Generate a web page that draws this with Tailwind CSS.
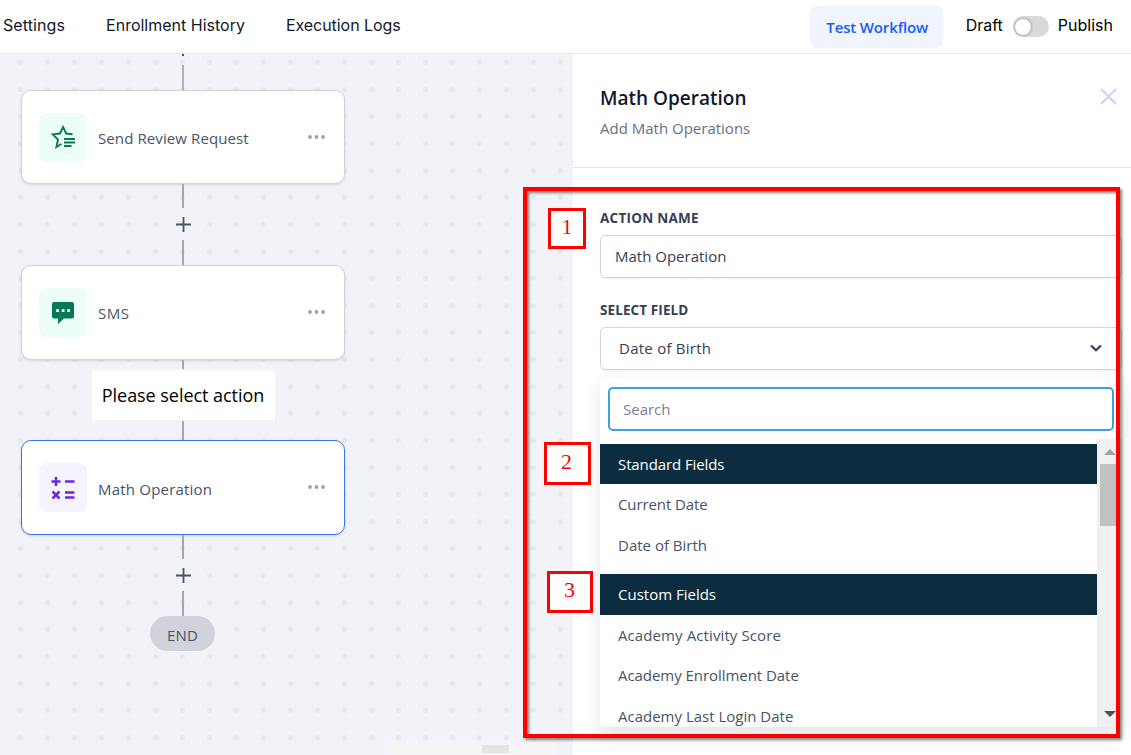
<!DOCTYPE html>
<html lang="en">

<head>
  <meta charset="UTF-8">
  <meta name="viewport" content="width=device-width, initial-scale=1.0">
  <title>Workflow - Math Operation</title>
  <script src="https://cdn.jsdelivr.net/npm/@tailwindcss/browser@4"></script>
</head>

<body class="relative flex h-[755px] w-[1131px] flex-col overflow-hidden bg-white font-['Open_Sans','Noto_Sans',sans-serif] text-[15px] text-[#475467]">
  <!-- Top bar -->
  <header class="flex h-[54px] shrink-0 items-start border-b border-[#e9eaee] bg-white font-['Inter',sans-serif] text-base text-[#101828]">
    <nav class="flex gap-[41px] pt-[13px] pl-[3px] whitespace-nowrap">
      <a class="tracking-[0.1px]">Settings</a>
      <a>Enrollment History</a>
      <a class="tracking-[-0.05px]">Execution Logs</a>
    </nav>
    <div class="mr-[18px] ml-auto flex items-start whitespace-nowrap text-black">
      <button class="mt-[6px] mr-[23px] h-[41px] w-[133px] rounded-lg bg-[#eff4ff] pt-[2px] pl-[2px] font-['Open_Sans',sans-serif] text-[15px] font-semibold tracking-[-0.15px] text-[#155eef] shadow-xs">Test Workflow</button>
      <span class="pt-[13px]">Draft</span>
      <span class="mt-4 mr-[9px] ml-[10px] flex h-[21px] w-9 items-center rounded-full bg-[#d9d9d9] px-[2px]">
        <span class="size-4 rounded-full bg-white shadow-[0_0_3px_rgba(0,0,0,0.45)]"></span>
      </span>
      <span class="pt-[13px]">Publish</span>
    </div>
  </header>

  <div class="flex min-h-0 flex-1">
    <!-- Workflow canvas -->
    <main class="relative w-[573px] shrink-0 overflow-hidden bg-[#f2f3f8] bg-[radial-gradient(circle,#e8e8e8_2.3px,transparent_3px)] bg-[length:27px_27px] bg-[position:7px_-5px]">
      <div class="ml-[21px] flex w-[324px] flex-col items-center">
        <div class="h-[2px] w-[2px] bg-[#475467]"></div>
        <div class="mt-[9px] h-[25px] w-[1.5px] bg-[#b0b2b8]"></div>

        <div class="flex h-[94px] w-full items-center rounded-[10px] border border-[#d0d5dd] bg-white pr-[18px] pl-[17px] shadow-sm">
          <div class="flex h-[49px] w-12 items-center justify-center rounded-lg bg-[#ecfdf5]">
            <svg class="size-6" viewBox="0 0 24 24" fill="none" stroke="#047857" stroke-width="1.9">
              <path d="M21.500 9.200L15.200 8.500L12 2L9 8.500L1.700 9.400L7 14.500L5.400 22L10.400 19" />
              <path d="M13 14H24M13 17.500H24M13 21H20.500" />
            </svg>
          </div>
          <span class="mt-[3px] ml-[11px] tracking-[0.1px]">Send Review Request</span>
          <svg class="mr-px mb-px ml-auto h-[4px] w-[17px]" viewBox="0 0 17 4" fill="#98a2b3"><circle cx="2" cy="2" r="1.9" /><circle cx="8.5" cy="2" r="1.9" /><circle cx="15" cy="2" r="1.9" /></svg>
        </div>

        <div class="h-6 w-[1.5px] bg-[#a4a7ae]"></div>
        <div class="flex h-8 items-center pl-px">
          <svg class="size-[15px]" viewBox="0 0 15 15" stroke="#475467" stroke-width="1.8"><path d="M0 7.5H15M7.5 0V15" /></svg>
        </div>
        <div class="h-[25px] w-[1.5px] bg-[#a4a7ae]"></div>

        <div class="flex h-[95px] w-full items-center rounded-[10px] border border-[#d0d5dd] bg-white pr-[18px] pl-[17px] shadow-sm">
          <div class="flex h-[49px] w-12 items-center justify-center rounded-lg bg-[#ecfdf5]">
            <svg class="size-[22px]" viewBox="0 0 22 22">
              <path d="M2 0H20Q22 0 22 2V14.500Q22 16.500 20 16.500H12L6 22V16.500H2Q0 16.500 0 14.500V2Q0 0 2 0Z" fill="#047857" />
              <path d="M4.200 7.200H7V10H4.200ZM9.700 7.200H12.500V10H9.700ZM15.200 7.200H18V10H15.200Z" fill="#fff" />
            </svg>
          </div>
          <span class="mt-px ml-[11px] tracking-[0.5px]">SMS</span>
          <svg class="mr-px mb-[2px] ml-auto h-[4px] w-[17px]" viewBox="0 0 17 4" fill="#98a2b3"><circle cx="2" cy="2" r="1.9" /><circle cx="8.5" cy="2" r="1.9" /><circle cx="15" cy="2" r="1.9" /></svg>
        </div>

        <div class="h-[9px] w-[1.5px] bg-[#a4a7ae]"></div>
        <div class="flex h-[52px] w-[185px] items-center justify-center rounded-[4px] border border-dotted border-[#e4e7ec] bg-white text-[18px] tracking-[-0.05px] whitespace-nowrap text-black">Please select action</div>
        <div class="h-[19px] w-[1.5px] bg-[#a4a7ae]"></div>

        <div class="flex h-[95px] w-full items-center rounded-[10px] border border-[#3b73e8] bg-white pr-[18px] pl-[17px] shadow-sm">
          <div class="flex h-[49px] w-12 items-center justify-center rounded-lg bg-[#f5f3ff]">
            <svg class="size-6" viewBox="0 0 24 24" fill="none" stroke="#6d28d9" stroke-width="2.500">
              <path d="M0.500 5.500H9.500M5 1V10M14 5.500H23.500M14 16.500H23.500M14 21.500H23.500M1.500 15.500L8.500 22.500M8.500 15.500L1.500 22.500" />
            </svg>
          </div>
          <span class="mt-[3px] ml-[11px] tracking-[0.2px]">Math Operation</span>
          <svg class="mr-px mb-px ml-auto h-[4px] w-[17px]" viewBox="0 0 17 4" fill="#98a2b3"><circle cx="2" cy="2" r="1.9" /><circle cx="8.5" cy="2" r="1.9" /><circle cx="15" cy="2" r="1.9" /></svg>
        </div>

        <div class="h-6 w-[1.5px] bg-[#a4a7ae]"></div>
        <div class="flex h-8 items-center pl-px">
          <svg class="size-[15px]" viewBox="0 0 15 15" stroke="#475467" stroke-width="1.8"><path d="M0 7.5H15M7.5 0V15" /></svg>
        </div>
        <div class="h-[25px] w-[1.5px] bg-[#a4a7ae]"></div>
        <div class="mr-px flex h-[35px] w-[65px] items-center justify-center rounded-full bg-[#d0d3dc] pt-[3px] tracking-[0.2px]">END</div>
      </div>

      <!-- Horizontal scrollbar of the canvas -->
      <div class="absolute bottom-0 left-[387px] flex h-[14px] w-[169px] items-center bg-[#f5f5f5] pt-px pl-[95px]">
        <div class="h-2 w-[27px] bg-[#e4e4e4]"></div>
      </div>
    </main>

    <!-- Action settings -->
    <aside class="flex min-w-0 flex-1 flex-col bg-white">
      <div class="flex h-[114px] shrink-0 justify-between border-b border-[#e4e7ec] pr-[14px] pl-[27px]">
        <div>
          <h2 class="mt-[30px] text-[19px] leading-7 font-semibold text-[#101828]">Math Operation</h2>
          <p class="mt-[4px] leading-6 text-[#667085]">Add Math Operations</p>
        </div>
        <svg class="mt-[34px] size-[17px]" viewBox="0 0 17 17" stroke="#c7d2fe" stroke-width="2" stroke-linecap="round"><path d="M1.500 1.500L15.500 15.500M15.500 1.500L1.500 15.500" /></svg>
      </div>

      <div class="mr-[9px] ml-[27px] flex flex-col pt-[40px]">
        <label class="h-[27px] text-[13.500px] leading-[20px] font-bold tracking-[0.25px] text-[#344054]">ACTION NAME</label>
        <div class="flex h-[43px] items-center rounded-[5px] border border-[#d0d5dd] pl-[14px] text-[#344054] shadow-xs">Math Operation</div>
        <label class="mt-[22px] h-[27px] text-[13.500px] leading-[20px] font-bold tracking-[0.1px] text-[#344054]">SELECT FIELD</label>
        <div class="flex h-[43px] items-center justify-between rounded-[5px] border border-[#d0d5dd] pr-[19px] pl-[18px] font-medium text-[#344054] shadow-xs">
          <span class="tracking-[0.25px]">Date of Birth</span>
          <svg class="mb-px h-[8px] w-3" viewBox="0 0 12 8" fill="none" stroke="#344054" stroke-width="2.200"><path d="M1 1.500L6 6.300L11 1.500" /></svg>
        </div>

        <div class="mt-[7px] h-[350px] overflow-hidden rounded-[5px] bg-white shadow-[0_8px_18px_rgba(16,24,40,0.12)]">
          <div class="mt-[10px] mr-[8px] ml-[8px] flex h-[44px] items-center rounded-[5px] border-2 border-[#3ba2dc] pl-[13px] text-[#7b8190]">Search</div>
          <div class="mt-2 flex h-[288px]">
            <ul class="w-[497px] pt-[5px] text-[#475467]">
              <li class="flex h-[40px] items-center bg-[#0c2d3f] pl-[18px] tracking-[-0.1px] text-white">Standard Fields</li>
              <li class="flex h-[41px] items-center pl-[18px] tracking-[-0.1px]">Current Date</li>
              <li class="flex h-[41px] items-center pl-[18px]">Date of Birth</li>
              <li class="mt-2 flex h-[41px] items-center bg-[#0c2d3f] pl-[18px] text-white">Custom Fields</li>
              <li class="flex h-[41px] items-center pl-[18px] tracking-[0.1px]">Academy Activity Score</li>
              <li class="flex h-[40px] items-center pb-px pl-[18px] tracking-[-0.05px]">Academy Enrollment Date</li>
              <li class="flex h-[41px] items-center pl-[18px]">Academy Last Login Date</li>
            </ul>
            <div class="flex flex-1 flex-col items-center bg-[#f0f0f0]">
              <svg class="mt-[10px] h-[6px] w-3" viewBox="0 0 12 6" fill="#a3a3a3"><path d="M0 6L6 0L12 6Z" /></svg>
              <div class="mt-[9px] h-[62px] w-5 bg-[#c1c1c1]"></div>
              <svg class="mt-auto mb-[10px] h-[6px] w-3" viewBox="0 0 12 6" fill="#505050"><path d="M0 0L6 6L12 0Z" /></svg>
            </div>
          </div>
        </div>
      </div>
    </aside>
  </div>

  <!-- Callouts over the page -->
  <div class="absolute top-[187px] left-[523px] h-[551px] w-[597px] border-4 border-[#ff0000] drop-shadow-[2px_2px_1.5px_rgba(0,0,0,0.5)]"></div>
  <div class="absolute top-[208px] left-[548px] flex h-[41px] w-[38px] items-center justify-center border-3 border-[#ff0000] bg-white pb-[4px] font-['Liberation_Serif',serif] text-[22px] text-[#ff0000]">1</div>
  <div class="absolute top-[442px] left-[544px] flex h-[43px] w-[47px] items-center justify-center border-3 border-[#ff0000] bg-white pr-[2px] pb-[4px] font-['Liberation_Serif',serif] text-[22px] text-[#ff0000]">2</div>
  <div class="absolute top-[571px] left-[547px] flex h-[42px] w-[46px] items-center justify-center border-3 border-[#ff0000] bg-white pr-px pb-[5px] font-['Liberation_Serif',serif] text-[22px] text-[#ff0000]">3</div>
</body>

</html>
